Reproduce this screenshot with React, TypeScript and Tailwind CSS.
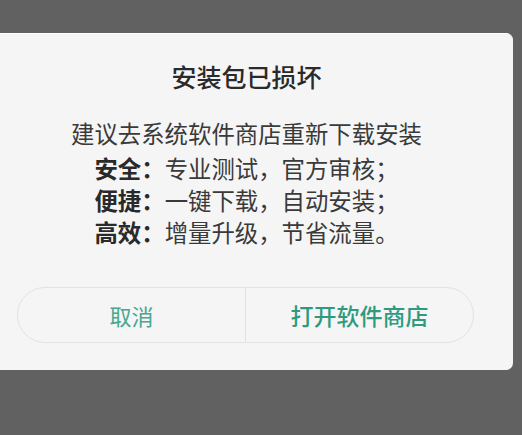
const FONT = { fontFamily: '"Noto Sans CJK SC", "Noto Sans", sans-serif' };

const perks = [
  { label: "安全：", text: "专业测试，官方审核；" },
  { label: "便捷：", text: "一键下载，自动安装；" },
  { label: "高效：", text: "增量升级，节省流量。" },
];

export default function App() {
  return (
    <div className="w-[522px] h-[435px] overflow-hidden bg-[#616161] pt-[33px]" style={FONT}>
      {/* dialog runs off the left edge, so only the right corners show */}
      <div className="ml-[-20px] w-[533px] bg-[#f5f5f5] border-t border-white rounded-r-[7px] pt-[25px] pb-[27px]">
        <h1 className="text-center text-[25px] leading-[34px] font-medium text-[#2a2a2a]">
          安装包已损坏
        </h1>

        <p className="mt-[23px] text-center text-[23.4px] leading-[34px] text-[#3a3a3a]">
          建议去系统软件商店重新下载安装
        </p>
        <ul className="mt-[2px]">
          {perks.map((p) => (
            <li key={p.label} className="text-center text-[23.4px] leading-[32px] text-[#3a3a3a]">
              <span className="font-bold text-[#2a2a2a]">{p.label}</span>
              {p.text}
            </li>
          ))}
        </ul>

        <div className="mt-[39px] ml-[37px] mr-[39px] h-[56px] flex rounded-full border border-[#e2e2e2]">
          <button className="flex-1 flex items-center justify-center text-[22px] text-[#48a78f]">
            取消
          </button>
          <button className="flex-1 flex items-center justify-center border-l border-[#e2e2e2] text-[23px] font-medium text-[#2f9a80]">
            打开软件商店
          </button>
        </div>
      </div>
    </div>
  );
}
